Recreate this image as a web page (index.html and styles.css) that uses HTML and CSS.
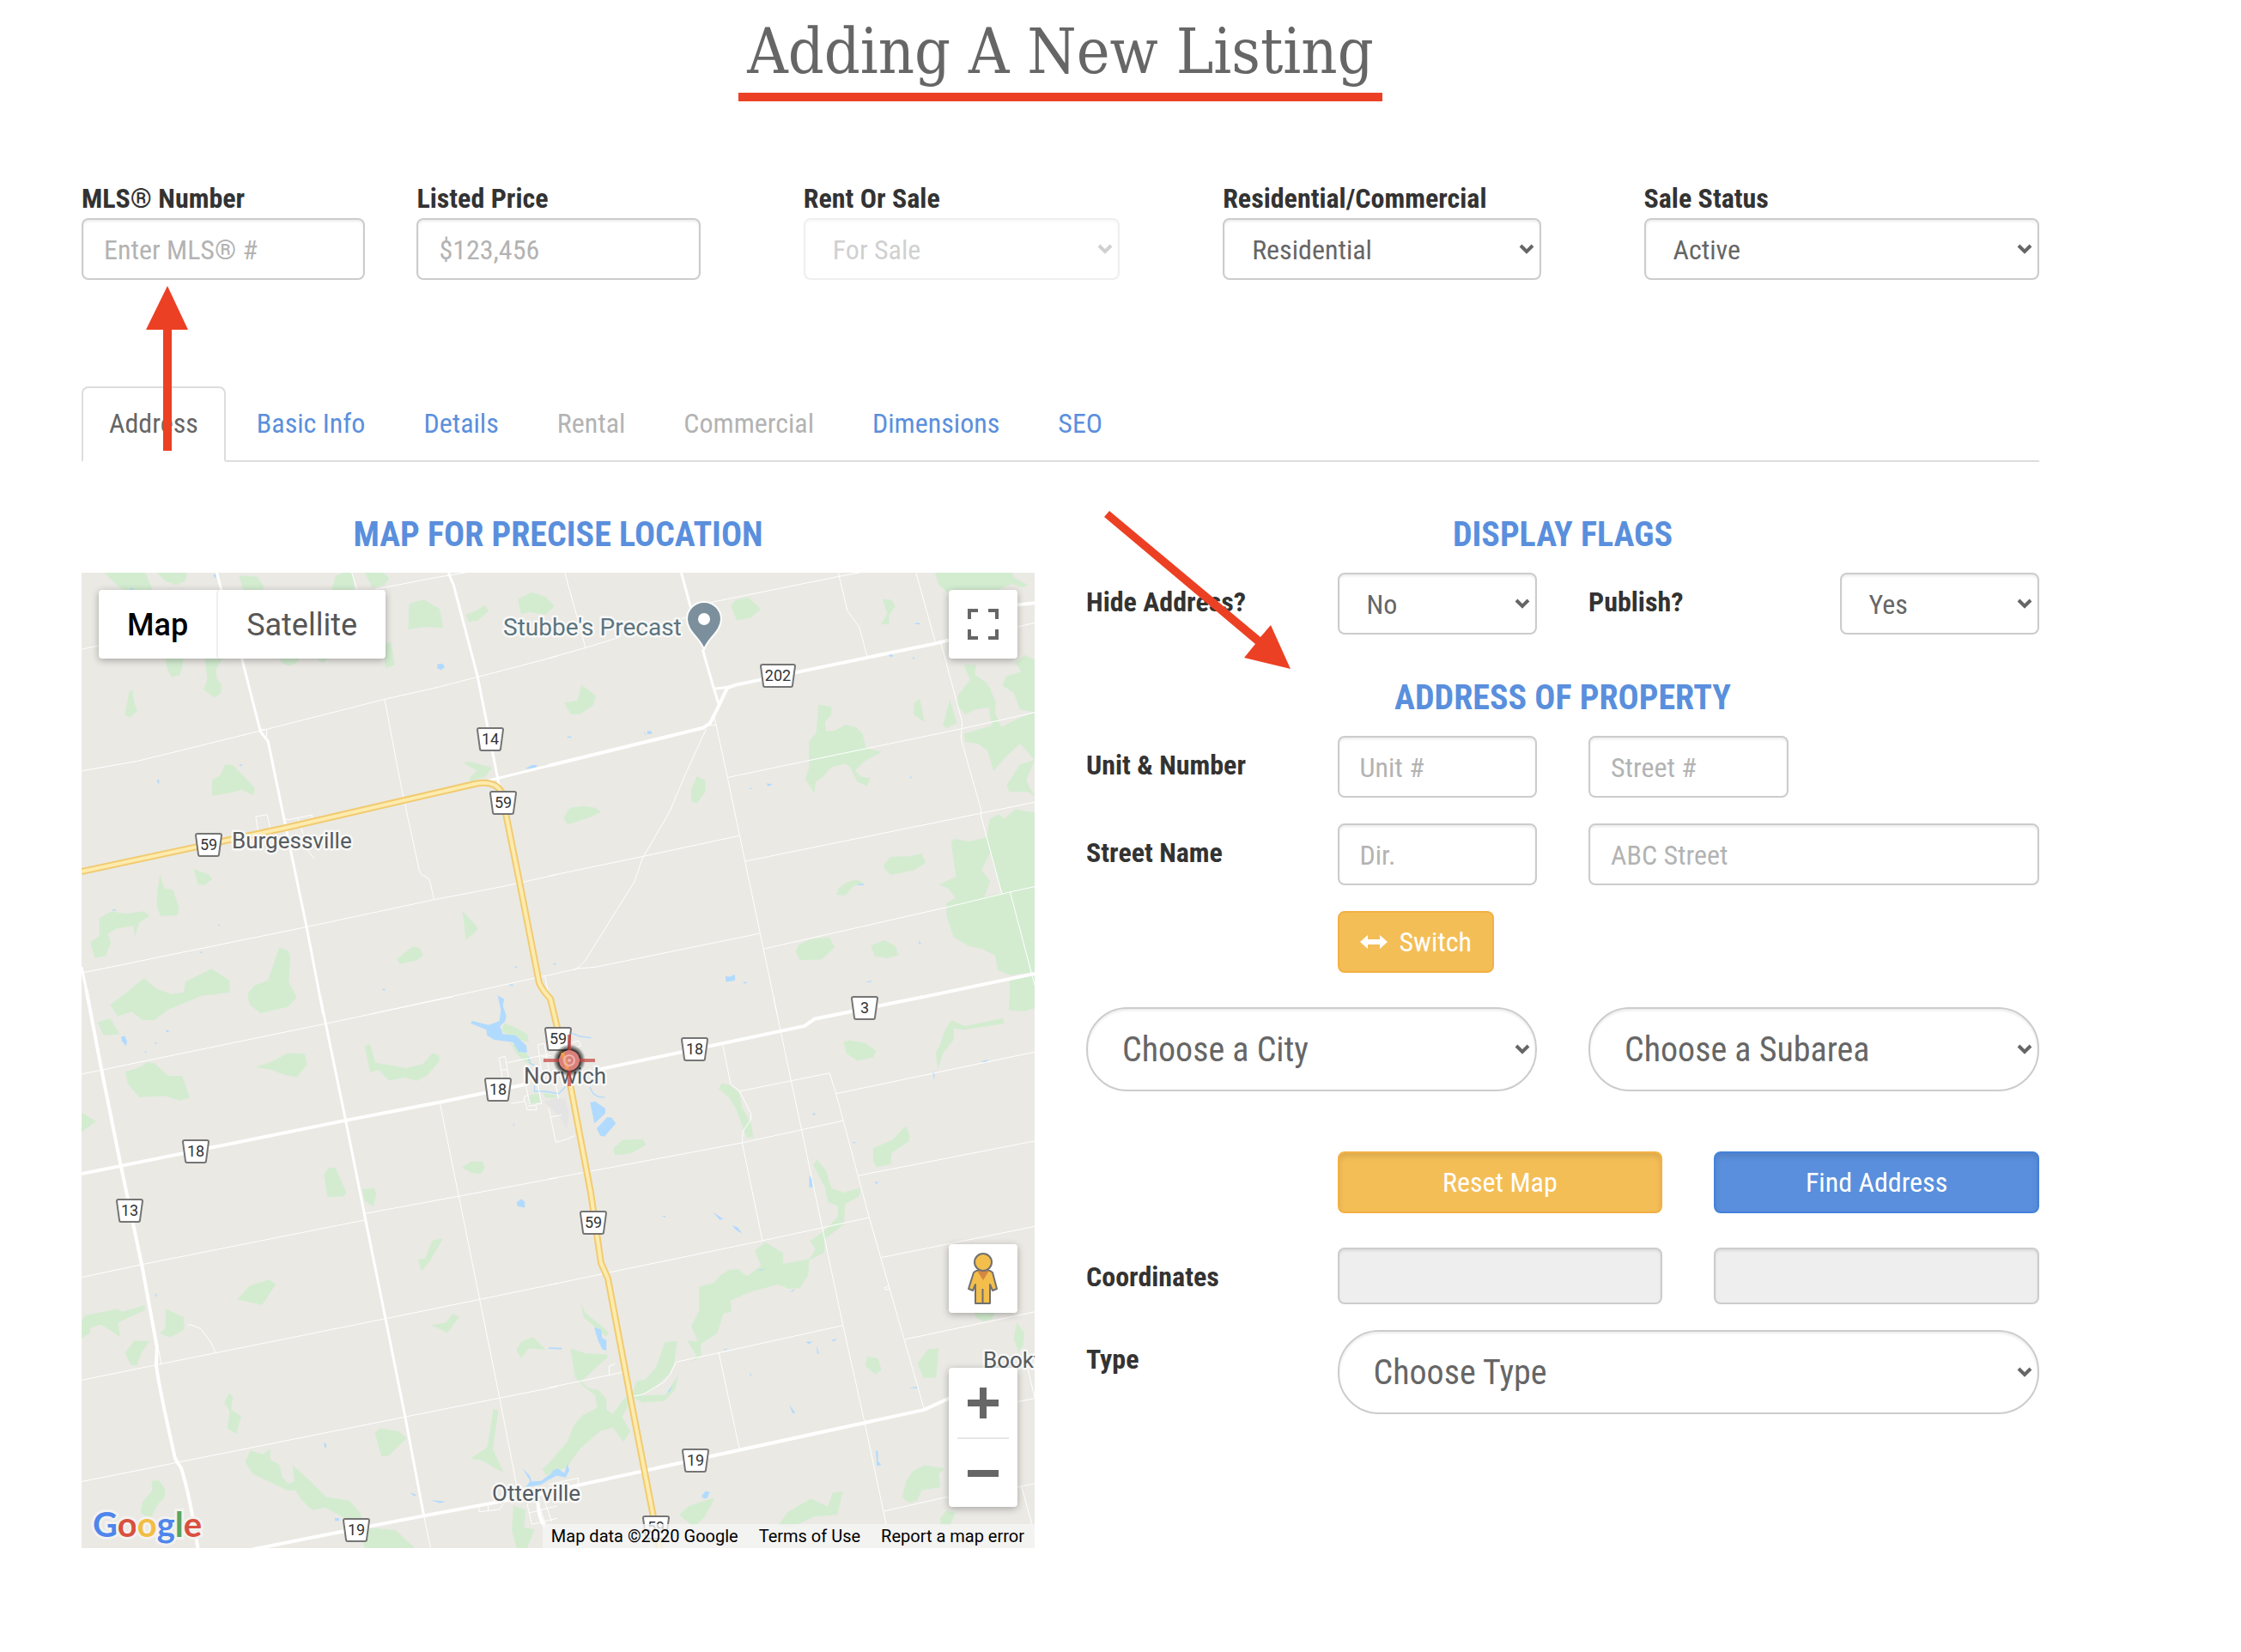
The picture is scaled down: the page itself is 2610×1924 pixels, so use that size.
FILE: index.html
```
<!DOCTYPE html>
<html lang="en">
<head>
<meta charset="utf-8">
<meta name="viewport" content="width=device-width, initial-scale=1">
<title>Adding A New Listing</title>
<link rel="stylesheet" href="styles.css">
</head>
<body>
<main class="page">
  <header class="page-header"><h1 class="page-title">Adding A New Listing</h1></header>

  <form class="listing">
    <section class="summary">
      <div class="summary-pair">
        <div class="field">
          <label for="mls">MLS® Number</label>
          <input class="control" id="mls" type="text" placeholder="Enter MLS® #">
          <svg class="arrow-up" viewBox="0 0 50 194" aria-hidden="true"><path d="M25 0L49 51H30V192H20V51H0Z"/></svg>
        </div>
        <div class="field">
          <label for="price">Listed Price</label>
          <input class="control" id="price" type="text" placeholder="$123,456">
        </div>
      </div>
      <div class="field">
        <label for="rent">Rent Or Sale</label>
        <select class="control" id="rent" disabled><option>For Sale</option></select>
      </div>
      <div class="field">
        <label for="kind">Residential/Commercial</label>
        <select class="control" id="kind"><option>Residential</option></select>
      </div>
      <div class="field">
        <label for="status">Sale Status</label>
        <select class="control" id="status"><option>Active</option></select>
      </div>
    </section>

    <nav class="tabs">
      <a class="tab active" href="#address">Address</a>
      <a class="tab" href="#basic">Basic Info</a>
      <a class="tab" href="#details">Details</a>
      <a class="tab disabled" href="#rental" aria-disabled="true">Rental</a>
      <a class="tab disabled" href="#commercial" aria-disabled="true">Commercial</a>
      <a class="tab" href="#dimensions">Dimensions</a>
      <a class="tab" href="#seo">SEO</a>
    </nav>

    <div class="panels">
      <section class="panel">
        <h2>MAP FOR PRECISE LOCATION</h2>
        <div class="map">
          <svg class="map-canvas" viewBox="0 0 1110 1136" preserveAspectRatio="xMidYMid slice">
            <rect width="1110" height="1136" fill="#eae9e4"/>

            <!-- north west -->
            <g transform="matrix(.35714 0 0 .38265 -6 -86)">
              <path class="wood" d="M90 225H225L248 277H150ZM262 225H360L355 250 325 262 290 250ZM530 233L590 237 612 268 605 280H545ZM833 275L845 235 870 225H900L908 280H840ZM940 225H1000L1020 242 1005 262 965 270ZM1085 320L1132 306 1185 335 1195 392 1130 390 1082 398ZM1270 352L1300 342 1330 324 1345 340 1310 370 1280 375ZM1440 305L1485 284 1530 298 1558 328 1530 352 1480 345 1450 350ZM290 480H350L345 515 335 538 310 542 295 515ZM418 480H474L470 495 455 520 458 548 474 568 470 592 450 605 415 580 427 550ZM660 480H730L720 498 695 508 670 500ZM780 485H820L805 500ZM1000 445L1025 435 1038 505 1008 516ZM173 585L183 582 187 615 198 645 175 666 158 658ZM485 808L510 810 550 848 583 882 575 902 540 885 510 893 442 904 443 855 470 840ZM1262 803L1280 799 1355 818 1335 845 1310 852 1282 862 1285 845 1307 828ZM382 1127L430 1143 443 1158 418 1175H397ZM272 1143L287 1185 315 1190 335 1245 330 1267 275 1270 262 1240 265 1190ZM75 1275L115 1255 160 1262 222 1255 238 1270 205 1290 190 1335 186 1300 130 1308 102 1325 112 1350 95 1392 60 1397 45 1350 75 1330ZM662 1364L690 1375 697 1395 693 1470 718 1517 690 1545 600 1565 565 1540 558 1505 580 1482 625 1465ZM110 1540L160 1505 220 1458 260 1490 310 1507 350 1502 355 1470 440 1430 498 1465 501 1502 410 1512 300 1554 255 1586H215L180 1561 135 1575ZM1258 1253L1305 1300 1308 1312 1270 1343 1265 1300ZM1045 1400L1098 1362 1120 1368 1130 1390 1110 1405 1055 1415Z"/>
              <path class="water" d="M447 230H455V240H450ZM176 272H184V277H176ZM1177 503L1195 502 1201 512 1190 521 1177 516ZM1465 820L1485 810 1503 810 1498 817 1470 822ZM263 855H270V866H265ZM532 809H540V813H532ZM118 1249H129V1253H118ZM461 1297L468 1295 466 1300ZM402 1378L411 1380 406 1384ZM1428 1424L1438 1422 1434 1428ZM998 1491H1006V1496H1000ZM1414 1478H1424V1482H1414Z"/>
              <path class="lane" d="M17 458L75 446M17 828L200 798 600 706 1005 610 1180 573 1568 479M600 702H620V725M975 275L1180 238 1268 225M898 225L915 275M1005 610L1060 880 1118 1130 1124 1143 1148 1155 1155 1172 1166 1220M17 1443L750 1303 1166 1220 1400 1178 1568 1143M960 1568L1280 1503 1540 1449M592 1010L585 967 622 961 632 1003M680 973L690 977 768 962V980M723 972L740 1020M755 1070L775 1095M1528 1453L1538 1500"/>
              <path class="road" d="M458 225L475 285 540 488 600 708 625 738 683 1000 750 1300 805 1568M1213 225L1230 262 1308 540 1340 690 1380 880M1345 857L1568 806M17 1425L50 1575"/>
            </g>
            <!-- north east -->
            <g transform="matrix(.36352 0 0 .38265 544 -86)">
              <path class="wood" d="M0 308L17 325 0 342ZM583 325L600 308 640 300 680 335 648 362 603 370ZM1070 305L1100 308 1111 328 1092 350 1090 381 1065 381 1085 350ZM1238 225H1485L1492 240 1535 262 1515 270 1485 258 1450 273 1420 290H1285L1250 262ZM105 566L151 600 142 630 100 655 70 656 50 620 92 614ZM865 626L906 634V655L885 680 888 706 915 706 950 687 985 695 1006 715 1016 758 1068 770 1010 800 982 828 1000 845 1030 850 1020 875 988 860 965 815 950 806 905 817 880 845 855 862 852 897 822 852 834 820V737L857 712ZM1188 608L1197 640 1204 680 1169 655 1172 620ZM1285 610L1308 682 1275 698 1263 690ZM1330 505H1370L1366 535 1405 560 1413 575 1433 620 1430 650 1450 695 1500 670 1557 650V795L1510 745 1465 785 1425 828 1405 765 1375 745 1335 740 1330 715 1420 690 1410 635 1370 640 1335 656 1310 630V600L1350 550ZM1495 500L1525 475 1557 490V650L1510 640 1490 590 1453 568 1465 540 1515 525ZM1557 795L1510 808 1468 870 1475 892H1535L1557 905 1530 858ZM475 845L503 856 502 892 475 927 457 922 456 885ZM48 970L68 940 110 935 150 940 168 953 135 968 60 992ZM1413 975L1440 960 1460 973 1495 945 1557 955V1440L1480 1450 1440 1435 1430 1390 1390 1370 1350 1362 1298 1335 1275 1270V1230L1303 1215 1280 1185 1250 1175 1305 1150 1290 1050 1297 1035 1350 1043 1403 1030ZM1075 1112L1095 1090 1150 1088 1195 1080 1209 1108 1170 1130 1095 1145 1073 1122ZM922 1205L930 1185 955 1167 985 1159 1010 1168 975 1180 950 1207ZM792 1378L800 1358 840 1340 900 1334 916 1365 875 1402 805 1404ZM1032 1360L1075 1343 1110 1360 1121 1388 1085 1398 1045 1392ZM1478 1460L1557 1440V1550L1525 1560 1475 1555Z"/>
              <path fill="#eae9e4" d="M1415 1077L1452 1200 1395 1212 1415 1165 1387 1130Z"/>
              <path class="water" d="M1168 380L1188 376V382ZM978 486H1000V494ZM1082 465H1093L1104 480H1093ZM1166 483H1172V487H1166ZM316 707H330V716H316ZM305 712H311V719ZM60 723H72V727H60ZM698 866L718 869 703 875ZM643 878L653 883H645ZM1158 842L1164 850H1158ZM990 1172H1010V1176H994ZM1186 1344L1194 1355H1187ZM567 1452L578 1455 597 1448V1466L568 1470ZM624 1470L638 1471 626 1476ZM14 1414H25L18 1419ZM1015 1470L1037 1466 1030 1471Z"/>
              <path class="lane" d="M52 225L118 453M0 485L118 453 225 422M425 365L445 360M520 315L925 237 995 225M928 225L957 340 995 390 1022 485M1177 225L1240 440M1257 440L1325 680 1321 730 1385 945V965L1452 1202M1478 1195L1557 1480M530 660L573 848 612 1025 688 1370 732 1568M573 848L830 797 1321 700 1557 650M505 692L537 688M630 1103L1385 957 1557 923M688 1370L1280 1242 1477 1197 1557 1180M505 700L442 830 387 953 300 1095 275 1165 115 1408Q100 1425 80 1435M0 1148L308 1087 612 1025M0 1450L90 1430 150 1425 675 1323M1502 390L1557 377"/>
              <path class="road" d="M425 225L455 330M493 458L530 580 545 625M530 578L575 573M575 573L545 630"/>
              <path class="main-road" d="M0 812L495 697 517 683 545 630 572 575 600 566 1240 440 1290 428M1500 323L1557 317M1200 1516L1557 1445"/>
            </g>
            <!-- south west -->
            <g transform="matrix(.35714 0 0 .41454 -6 494)">
              <path class="wood" d="M558 0H720L690 28 600 45ZM70 72L110 60 140 105 88 108ZM17 325L65 350 17 380ZM160 210L200 200 230 185 255 187 300 222 345 222 369 283 335 292 290 278 205 282 168 245ZM585 197L635 183 690 158 745 160 752 190 720 225 690 222 635 205ZM940 138L957 133 975 185 1010 190 1075 200 1130 188 1160 158 1184 165 1182 182 1145 220 1110 236 1070 226 1020 235 985 205 958 212ZM808 500L822 480 845 480 880 550 870 560 818 563ZM932 540L972 538 978 555 968 590 940 572ZM1257 480L1285 464 1322 462 1332 480 1318 495H1295ZM1113 738L1137 735 1160 685 1196 678 1155 740 1125 770ZM525 850L565 812 630 794 650 808 605 866ZM17 910L27 895 135 877 150 885 222 866 224 880 135 915 143 955 80 920 42 932 48 942 17 960ZM292 877L350 900 352 935 305 957 272 945 290 930ZM158 1000L190 965 238 968 212 1000 198 1035H178ZM1157 922L1205 915 1228 890 1248 900 1210 944ZM1435 992L1450 970 1488 955 1530 990 1475 988 1450 1015ZM482 1140L498 1113 510 1122 505 1160 537 1178 522 1228 492 1212 500 1165ZM973 1225L990 1212 1050 1220 1077 1240 1018 1290H995ZM1360 1158L1376 1162 1358 1270 1393 1337 1320 1302 1285 1297 1340 1265ZM550 1307L568 1275 610 1285 632 1270V1300L662 1315 672 1350 690 1368 710 1362 705 1315 750 1350 815 1405 890 1415 925 1450 940 1490 1040 1498 1104 1548H940L920 1490 870 1462 810 1435 770 1442 735 1415 715 1387 685 1385 575 1340ZM245 1360L270 1358 290 1385 288 1405 262 1430 240 1470 210 1450 215 1420 248 1385ZM1520 1325L1570 1290V1330L1530 1345ZM1425 1430L1465 1440 1460 1490 1494 1497 1470 1548H1435L1420 1500Z"/>
              <path class="water" d="M146 112L158 110 165 125 162 138 148 124ZM293 94H301V99H293ZM255 128H263L258 133ZM222 153H230L226 158ZM255 832L263 838 260 843ZM807 1252L815 1256V1266H809ZM1089 1392L1110 1400 1100 1402ZM1155 1414L1205 1418 1185 1422ZM843 1465H857V1472H843ZM1436 578L1450 568 1462 575V592L1438 588ZM1455 1325L1478 1345 1485 1362 1515 1360 1570 1325V1340L1515 1370 1465 1378 1480 1360Z"/>
              <path class="lane" d="M17 217L815 75 1225 0M17 788L213 752 940 627M940 609L1247 560 1568 508M17 1077L260 1034 1008 904 1315 850 1568 805M17 1362L335 1307 1072 1180 1380 1127 1568 1095M1185 297L1247 560 1315 850 1380 1127 1435 1370M363 925L370 920 405 932 438 970 454 1000M268 990L277 1032M1133 1458L1155 1548M1313 1435V1447L1380 1440 1392 1425M1343 1428V1443M1470 1425L1485 1482 1568 1465M1475 1450L1568 1430M1500 1410L1530 1480M1520 1400L1550 1475"/>
              <path class="road" d="M795 0L878 347 943 627 1008 904 1072 1180 1133 1458"/>
              <path class="main-road" d="M32 -20L82 205 145 475 213 752 263 985 260 1035Q270 1100 322 1297L342 1325Q370 1400 396 1548M17 497L145 475 878 347 1185 296 1470 245M575 1552L820 1510 1133 1458 1568 1388M1505 1420Q1508 1470 1530 1490"/>
            </g>
            <!-- south east -->
            <g transform="matrix(.36352 0 0 .41454 544 494)">
              <path class="wood" d="M1478 0H1557V30L1480 40ZM945 128L965 122 1015 130 1049 152 1040 170 990 180 955 160ZM1240 158L1255 132 1272 90 1290 66 1335 82 1455 60 1460 75 1330 93 1298 88V120L1265 155 1247 202ZM545 258L555 243 580 248 610 270 620 310 650 360 655 395H635L600 315 580 285ZM208 430L235 403 303 400 312 415 260 440 212 444ZM1040 425L1100 402 1145 362 1157 390 1155 405 1097 440V470L1050 478 1040 460ZM848 472L860 457 888 487 905 537 945 550 998 537 995 560 950 582 945 640 885 680 883 718 835 740 832 780 805 818 770 820 735 808 650 828 583 853 585 885 560 890 540 945 488 975V1010L455 1027 475 1010 443 965 478 968 457 925 483 880 481 815 530 803 550 782 578 767 608 765 635 785 680 755 660 712 695 690 752 720 750 750 835 737 855 710 838 685 880 660 925 620 928 588 895 577 885 535ZM103 860L118 888 192 942 185 955 112 900ZM70 988L120 1002 187 1005V1015L160 1035 105 1080 125 1098 160 1105 185 1130V1160L205 1172 240 1130 270 1110 280 1080 310 1075 345 1040 372 970 412 967 402 1030 385 1060 330 1105 285 1120 375 1118 415 1062 405 1105 370 1135 300 1140 270 1125 235 1180 262 1220 240 1250 205 1210 165 1220 100 1270 60 1320 0 1345V1310L60 1250 80 1205 110 1175 155 1155 150 1120 120 1100 85 1070ZM1020 1010L1055 1015 1066 1048 1047 1060 1015 1038ZM1182 1030L1215 990 1250 987 1242 1070H1200ZM1490 960L1500 915 1525 945 1520 980 1505 998ZM1363 887H1430L1420 905 1395 912 1370 902ZM1133 1405L1145 1360 1170 1330 1205 1316 1270 1325 1250 1340 1255 1378 1195 1385 1180 1415 1155 1422ZM418 1455L450 1430 533 1407 500 1460 465 1490ZM735 1485L765 1448 840 1410 895 1432 910 1393 942 1390 925 1455 850 1460 780 1490ZM1255 1465L1275 1443 1303 1450 1285 1485H1257Z"/>
              <path class="water" d="M146 928L168 935 172 958 185 965V993L172 990 158 965ZM0 985L42 986V990L0 989ZM490 1402L503 1388 516 1392 508 1408 497 1410ZM382 1108L400 1090 385 1112ZM835 503L846 510V535H835ZM526 605L560 624 548 626ZM588 643L605 647 620 665 600 655ZM770 1145L790 1168 782 1170ZM1048 1273L1055 1278V1303L1065 1315 1052 1318ZM858 980L867 1005 860 1000ZM823 970L845 968 835 975ZM905 965L923 960 915 968ZM1385 182L1410 176 1400 184ZM1230 210L1237 212 1235 235ZM846 325L857 330 848 333ZM1044 520H1058L1050 526ZM972 408H987L978 412ZM362 615H374V620ZM1153 1098L1180 1095V1100ZM773 828L790 820 782 828ZM667 767L697 765 680 769ZM560 990L575 988 565 993ZM645 1055L651 1065H646ZM0 1350L15 1330 30 1325 50 1338 60 1312 66 1330 55 1350 25 1345 5 1355Z"/>
              <path class="lane" d="M720 0L743 95 777 237 810 372 877 650 943 923 1013 1198 1082 1485M558 135L583 245 612 265 648 328V345L622 378 620 410 685 685M612 265L900 214 920 270 1027 620 1203 1158M920 272L1557 155M0 512L620 410 943 348M993 502L1557 405M0 810L190 775 685 685 1027 620M1067 732L1557 645M1142 962L1557 885M270 1122L302 1117 368 1083 390 1060 408 1026 545 1000 943 923M545 1000L612 1273M0 1098L235 1055M194 1060V1038L214 1030M1092 812L1075 817 1080 823 1095 820M1075 1445L1275 1405 1290 1412M1500 1138L1557 1128M1535 1045L1557 1125M1500 1378L1557 1367M1515 1375L1557 1510M0 1370L95 1352V1372"/>
              <path class="main-road" d="M150 206L820 82 852 62 1200 0M0 1390L1203 1160 1290 1125"/>
            </g>

            <!-- river, ponds and side streets round Norwich -->
            <g transform="matrix(.33333 0 0 .33333 444 484)">
              <path class="wood" d="M145 122L180 135 225 160 231 188 190 178 135 150ZM165 190L200 210 230 235 245 270 215 255 185 225ZM230 375L265 368 272 398 235 404ZM280 365L325 372 330 382 290 384ZM528 555L565 530 625 528 639 548 590 575 533 582ZM0 625L30 607 70 605 76 630 62 648 30 645Z"/>
              <path fill="#e4e4e4" d="M280 395L330 385 358 385 372 440 362 495 350 465 300 410Z"/>
              <path class="water" d="M122 25L145 38 140 60 152 95 148 115 130 133 140 160 185 165 222 200 225 225 195 222 175 188 110 180 85 165 82 145 28 122 32 114 90 128 128 115 133 75ZM445 400L462 395 498 420V437L460 472ZM468 490L505 450 520 452 535 472 495 518 480 515ZM176 473H180V479H176Z"/>
              <path class="stream" d="M382 157L410 168 448 173M228 240L235 262 255 272 250 360 285 360 335 368 358 345M445 345Q455 385 497 380"/>
              <path class="lane" d="M138 312L127 243 148 238 160 310M155 260L300 230M135 285H155M262 197L285 193 305 310M262 197L275 290M275 240L310 235M218 330L235 405M260 325L275 403 255 405M168 403L215 395V378L228 375M218 395L225 425H258L255 408 228 412M300 418L325 538 362 528 390 515M308 450L345 443M325 340L335 385M383 190L405 183 413 200 385 212"/>
            </g>

            <g class="highway">
              <path class="casing" d="M0 348L238 297 458 246Q480 241 489 255L510 360 533 478Q538 488 546 496L555 534 568 590 593 722 605 804Q606 806 613 822L640 965 673 1136"/>
              <path class="centre" d="M0 348L238 297 458 246Q480 241 489 255L510 360 533 478Q538 488 546 496L555 534 568 590 593 722 605 804Q606 806 613 822L640 965 673 1136"/>
            </g>

            <defs>
              <path id="shield" d="M-13-13H13Q15-13 15-11L12 11Q12 13 10 13H-10Q-12 13-12 11L-15-11Q-15-13-13-13Z"/>
              <path id="shield-wide" d="M-18-13H18Q20-13 20-11L17 11Q17 13 15 13H-15Q-17 13-17 11L-20-11Q-20-13-18-13Z"/>
            </defs>
            <g class="shields">
              <g transform="translate(476 194)"><use href="#shield"/><text y="6">14</text></g>
              <g transform="translate(491 268)"><use href="#shield"/><text y="6">59</text></g>
              <g transform="translate(148 317)"><use href="#shield"/><text y="6">59</text></g>
              <g transform="translate(811 120)"><use href="#shield-wide"/><text y="6">202</text></g>
              <g transform="translate(912 507)"><use href="#shield"/><text y="6">3</text></g>
              <g transform="translate(714 555)"><use href="#shield"/><text y="6">18</text></g>
              <g transform="translate(555 543)"><use href="#shield"/><text y="6">59</text></g>
              <g transform="translate(485 602)"><use href="#shield"/><text y="6">18</text></g>
              <g transform="translate(133 674)"><use href="#shield"/><text y="6">18</text></g>
              <g transform="translate(56 743)"><use href="#shield"/><text y="6">13</text></g>
              <g transform="translate(596 757)"><use href="#shield"/><text y="6">59</text></g>
              <g transform="translate(715 1034)"><use href="#shield"/><text y="6">19</text></g>
              <g transform="translate(320 1115)"><use href="#shield"/><text y="6">19</text></g>
              <g transform="translate(669 1112)"><use href="#shield"/><text y="6">59</text></g>
            </g>
            <g class="places">
              <text class="poi" x="491" y="73">Stubbe's Precast</text>
              <text x="175" y="321">Burgessville</text>
              <text x="515" y="595">Norwich</text>
              <text x="478" y="1081">Otterville</text>
              <text x="1050" y="926">Bookton</text>
            </g>
            <path d="M725 90C722 77 705 69 705 54A20 20 0 0 1 745 54C745 69 728 77 725 90Z" fill="#7b909c" stroke="#fff" stroke-width="2"/>
            <circle cx="725" cy="54" r="7" fill="#fff"/>

            <defs><radialGradient id="halo"><stop offset=".6" stop-color="#111"/><stop offset="1" stop-color="#111" stop-opacity="0"/></radialGradient></defs>
            <circle cx="568" cy="568" r="19" fill="url(#halo)"/>
            <circle cx="568" cy="568" r="12" fill="#d9807a"/>
            <path d="M560 559L566 578" stroke="#f0a050" stroke-width="4"/>
            <circle cx="568" cy="568" r="6" fill="none" stroke="#f0b4b0" stroke-width="2"/>
            <circle cx="568" cy="568" r="2" fill="#f0b4b0"/>
            <path d="M538 568H556M580 568H598M568 538V556M568 580V598" stroke="#c5403c" stroke-opacity=".7" stroke-width="4"/>
          </svg>

          <div class="map-types">
            <button class="map-type current" type="button">Map</button>
            <button class="map-type" type="button">Satellite</button>
          </div>
          <button class="map-button fullscreen" type="button" aria-label="Toggle fullscreen view">
            <svg width="36" height="36" viewBox="0 0 18 18" fill="#666"><path d="M0 0v6h2V2h4V0zM12 0v2h4v4h2V0zM16 12v4h-4v2h6v-6zM2 12H0v6h6v-2H2z"/></svg>
          </button>
          <button class="map-button pegman" type="button" aria-label="Street View">
            <svg width="36" height="62" viewBox="0 0 36 62">
              <path d="M10 22H26L29 24 34 43 29 45 26 38V60H9V38L6 45 1 43 7 24Z" fill="#f3be4c" stroke="#707070" stroke-width="2" stroke-linejoin="round"/>
              <path d="M17.500 43V60" stroke="#707070" stroke-width="2"/>
              <path d="M11 22H25L18 33Z" fill="#d58742"/>
              <circle cx="18" cy="12" r="10" fill="#f3be4c" stroke="#707070" stroke-width="2"/>
            </svg>
          </button>
          <div class="zoom">
            <button class="zoom-button" type="button" aria-label="Zoom in"><svg width="36" height="36" viewBox="0 0 18 18" fill="#666"><path d="M18 7h-7V0H7v7H0v4h7v7h4v-7h7z"/></svg></button>
            <button class="zoom-button" type="button" aria-label="Zoom out"><svg width="36" height="36" viewBox="0 0 18 18" fill="#666"><path d="M0 7h18v4H0z"/></svg></button>
          </div>
          <a class="google" href="#google"><span class="g-blue">G</span><span class="g-red">o</span><span class="g-yellow">o</span><span class="g-blue">g</span><span class="g-green">l</span><span class="g-red">e</span></a>
          <div class="credits">
            <span>Map data ©2020 Google</span>
            <a href="#terms">Terms of Use</a>
            <a href="#report">Report a map error</a>
          </div>
        </div>
      </section>

      <section class="panel">
        <h2>DISPLAY FLAGS</h2>
        <svg class="arrow-down" viewBox="0 0 217 184" aria-hidden="true"><path d="M6 0L182 147 194 133 217 184 163 171 176 155 0 7Z"/></svg>
        <div class="grid">
          <label for="hide">Hide Address?</label>
          <select class="control" id="hide"><option>No</option></select>
          <label for="publish">Publish?</label>
          <select class="control" id="publish"><option>Yes</option></select>
        </div>
        <h2 class="second">ADDRESS OF PROPERTY</h2>
        <div class="grid">
          <label for="unit">Unit &amp; Number</label>
          <input class="control" id="unit" type="text" placeholder="Unit #">
          <input class="control" type="text" placeholder="Street #" aria-label="Street number">
        </div>
        <div class="grid">
          <label for="dir">Street Name</label>
          <input class="control" id="dir" type="text" placeholder="Dir.">
          <input class="control span2" type="text" placeholder="ABC Street" aria-label="Street name">
        </div>
        <div class="grid switch-row">
          <button class="btn warning" type="button">
            <svg width="32" height="16" viewBox="0 0 32 16" fill="#fff"><path d="M0 8L9 0V5H23V0L32 8 23 16V11H9V16Z"/></svg>
            Switch
          </button>
        </div>
        <div class="grid cities">
          <select class="control large span2" aria-label="City"><option>Choose a City</option></select>
          <select class="control large span2" aria-label="Subarea"><option>Choose a Subarea</option></select>
        </div>
        <div class="grid actions">
          <div class="pair">
            <button class="btn warning pressed" type="button">Reset Map</button>
            <button class="btn primary pressed" type="button">Find Address</button>
          </div>
        </div>
        <div class="grid">
          <label for="lat">Coordinates</label>
          <div class="pair">
            <input class="control readonly" id="lat" type="text" readonly>
            <input class="control readonly" type="text" readonly aria-label="Longitude">
          </div>
        </div>
        <div class="grid">
          <label for="type">Type</label>
          <select class="control large span3" id="type"><option>Choose Type</option></select>
        </div>
      </section>
    </div>
  </form>
</main>
</body>
</html>
```
FILE: styles.css
```
* { box-sizing: border-box; }

body {
  margin: 0;
  background: #fff;
  color: #333;
  font: 32px/44px "Roboto Condensed", Roboto, sans-serif;
}

.page { padding: 12px 235px 120px 95px; }

.page-header { text-align: center; }

.page-title {
  display: inline-block;
  margin: 0;
  padding: 0 10px;
  border-bottom: 10px solid #ec4024;
  color: #666;
  font: 73px/96px "Roboto Slab", "DejaVu Serif Condensed", "DejaVu Serif", serif;
  vertical-align: top;
}

label { font-weight: 700; }

/* Controls */
.control {
  display: block;
  width: 100%;
  min-width: 0;
  height: 72px;
  margin: 0;
  padding: 2px 24px 0;
  border: 2px solid #ccc;
  border-radius: 8px;
  background-color: #fff;
  box-shadow: inset 0 2px 3px rgba(0, 0, 0, .08);
  color: #666;
  font: inherit;
}

.control::placeholder { color: #b3b3b3; opacity: 1; }

select.control {
  appearance: none;
  padding: 2px 34px 0 32px;
  background-image: url("data:image/svg+xml,%3Csvg xmlns='http://www.w3.org/2000/svg' width='18' height='12' viewBox='0 0 18 12'%3E%3Cpath d='M2 2L9 9L16 2' fill='none' stroke='%23666' stroke-width='4'/%3E%3C/svg%3E");
  background-repeat: no-repeat;
  background-position: right 6px center;
}

select.control:disabled { opacity: .3; }

.control.readonly { height: 66px; background-color: #eee; }

select.control.large {
  height: 98px;
  padding-left: 40px;
  border-radius: 48px;
  font-size: 40px;
}

/* Listing summary */
.summary {
  display: grid;
  grid-template-columns: 720fr 368fr 370fr 460fr;
  gap: 120px;
  margin-top: 92px;
}

.summary-pair { display: grid; grid-template-columns: 1fr 1fr; gap: 60px; }

.field { position: relative; }
.field label { display: block; line-height: 42px; padding-bottom: 2px; }

.arrow-up, .arrow-down { position: absolute; z-index: 2; fill: #ec4024; pointer-events: none; }
.arrow-up { top: 123px; left: 75px; width: 50px; }
.arrow-down { top: -6px; left: 21px; width: 217px; }

/* Tabs */
.tabs {
  display: flex;
  gap: 4px;
  margin-top: 124px;
  border-bottom: 2px solid #ddd;
}

.tab {
  margin-bottom: -2px;
  padding: 19px 30px 21px;
  border: 2px solid transparent;
  border-radius: 8px 8px 0 0;
  color: #5a8fdd;
  text-decoration: none;
}

.tab.active { border-color: #ddd; border-bottom-color: #fff; background: #fff; color: #666; }
.tab.disabled { color: #b3b3b3; }

/* Panels */
.panels { display: grid; grid-template-columns: 1fr 1fr; gap: 60px; margin-top: 63px; }
.panel { position: relative; }

h2 {
  margin: 0 0 22px;
  color: #5a8fdd;
  font-size: 40px;
  line-height: 44px;
  text-align: center;
}
h2.second { margin-top: 52px; }

.grid { display: grid; grid-template-columns: repeat(4, 1fr); gap: 60px; }
.grid + .grid { margin-top: 30px; }
.grid label { padding-top: 12px; }
.grid.cities { margin-top: 40px; }
.grid.actions { margin-top: 70px; }
.grid.actions + .grid { margin-top: 40px; }
.span2 { grid-column: span 2; }
.span3 { grid-column: span 3; }
.pair { grid-column: 2 / -1; display: grid; grid-template-columns: 1fr 1fr; gap: 60px; }

.btn {
  display: flex;
  align-items: center;
  justify-content: center;
  gap: 14px;
  height: 72px;
  padding: 0 24px;
  border: 2px solid;
  border-radius: 8px;
  color: #fff;
  font: inherit;
}
.btn.warning { border-color: #f3b043; background: #f4be57; }
.btn.primary { border-color: #4482d9; background: #5a8fdd; }
.btn.pressed { box-shadow: inset 0 4px 6px rgba(0, 0, 0, .1); }
.switch-row .btn { grid-column: 2; justify-self: start; }

/* Map */
.map { position: relative; aspect-ratio: 1110 / 1136; overflow: hidden; font-family: Roboto, sans-serif; }
.map-canvas { display: block; width: 100%; height: 100%; }

.wood { fill: #d3ecd0; }
.water { fill: #b1daff; }
.stream { fill: none; stroke: #b1daff; stroke-width: 4; }
.lane, .road, .main-road { fill: none; stroke: #fff; vector-effect: non-scaling-stroke; }
.lane { stroke-width: 1; }
.road { stroke-width: 3; }
.main-road { stroke-width: 4; }
.highway { fill: none; stroke-linejoin: round; }
.casing { stroke: #f1cb70; stroke-width: 8; }
.centre { stroke: #fdebae; stroke-width: 4; }

.shields use { fill: #fff; stroke: #757575; stroke-width: 2; }
.shields text { fill: #333; font-size: 18px; text-anchor: middle; }
.places text { fill: #565b60; stroke: #f8f8f6; stroke-width: 5; stroke-linejoin: round; paint-order: stroke; font-size: 26px; }
.places .poi { fill: #5c7580; font-size: 28px; }

.map-types, .map-button, .zoom {
  position: absolute;
  border-radius: 4px;
  background: #fff;
  box-shadow: 0 2px 8px rgba(0, 0, 0, .3);
}
.map-types { top: 20px; left: 20px; display: flex; }
.map-type {
  height: 80px;
  padding: 2px 33px 0;
  border: 0;
  border-radius: 4px;
  background: none;
  color: #565656;
  font: 36px/44px Roboto, sans-serif;
}
.map-type + .map-type { border-left: 2px solid #eee; }
.map-type.current { color: #000; font-weight: 500; }

.map-button { right: 20px; display: grid; place-items: center; width: 80px; height: 80px; padding: 0; border: 0; }
.map-button svg, .zoom-button svg { display: block; }
.fullscreen { top: 20px; }
.pegman { bottom: 274px; }
.zoom { right: 20px; bottom: 48px; width: 80px; padding: 0 10px; }
.zoom-button {
  display: grid;
  place-items: center;
  width: 100%;
  height: 81px;
  padding: 0;
  border: 0;
  background: none;
}
.zoom-button + .zoom-button { border-top: 2px solid #e6e6e6; }

.google {
  position: absolute;
  bottom: 6px;
  left: 13px;
  font: 40px/44px Lato, sans-serif;
  font-weight: 700;
  text-decoration: none;
  paint-order: stroke;
  -webkit-text-stroke: 6px #f3f2f0;
}
.g-blue { color: #4f86ec; }
.g-red { color: #d9503f; }
.g-yellow { color: #f2bd42; }
.g-green { color: #58a55c; }

.credits {
  position: absolute;
  right: 0;
  bottom: 0;
  display: flex;
  gap: 24px;
  padding: 0 12px 0 10px;
  background: rgba(245, 245, 245, .8);
  color: #000;
  font-size: 20px;
  line-height: 28px;
}
.credits a { color: inherit; text-decoration: none; }
```
